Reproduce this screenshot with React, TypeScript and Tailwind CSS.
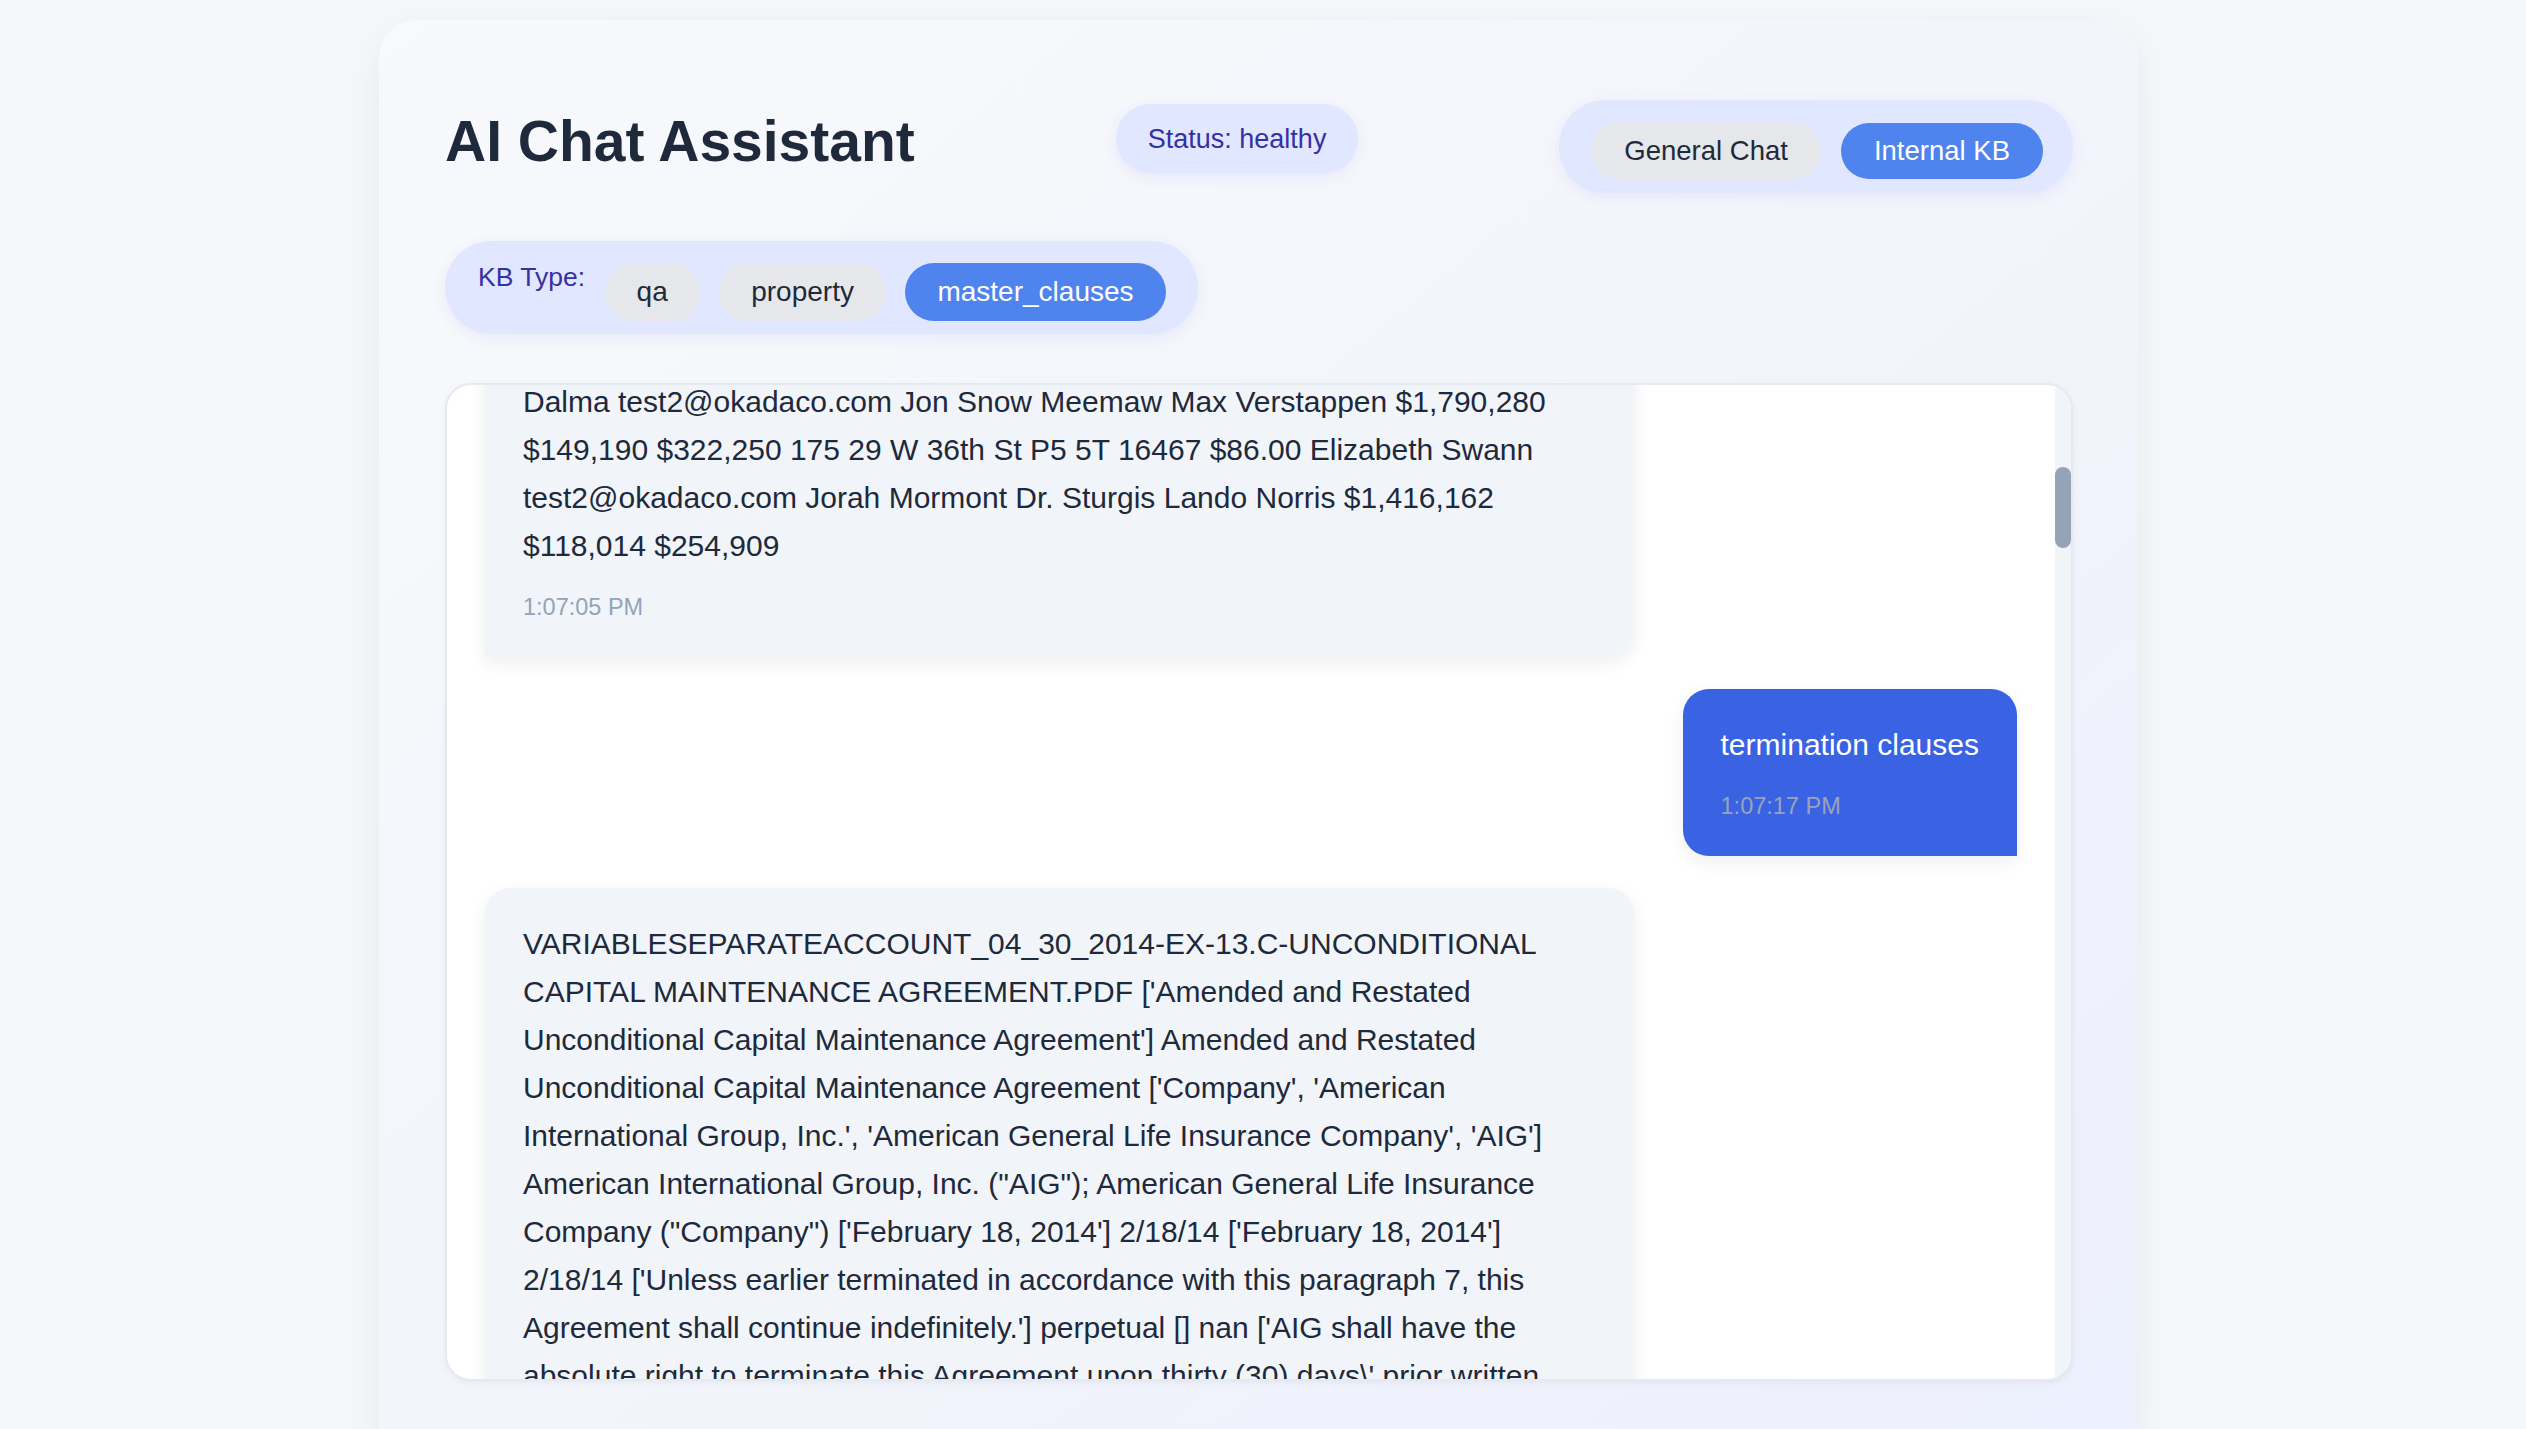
import React from "react";

type Message = {
  role: "user" | "assistant";
  time: string;
  lead?: string;
  text: string;
};

const records = [
  "VARIABLESEPARATEACCOUNT_04_30_2014-EX-13.C-UNCONDITIONAL CAPITAL MAINTENANCE AGREEMENT.PDF ['Amended and Restated Unconditional Capital Maintenance Agreement'] Amended and Restated Unconditional Capital Maintenance Agreement ['Company', 'American International Group, Inc.', 'American General Life Insurance Company', 'AIG'] American International Group, Inc. (\"AIG\"); American General Life Insurance Company (\"Company\") ['February 18, 2014'] 2/18/14 ['February 18, 2014'] 2/18/14 ['Unless earlier terminated in accordance with this paragraph 7, this Agreement shall continue indefinitely.'] perpetual [] nan ['AIG shall have the absolute right to terminate this Agreement upon thirty (30) days\\' prior written notice to the Company.'] 30 days ['This Agreement shall be governed by, and construed in accordance with, the laws of the State of New York, without giving effect to the principles of conflict of laws.'] New York ['This Agreement may not be assigned by either party without the prior written consent of the other party.'] Yes",
  "CYBERARKSOFTWARELTD_02_26_2014-EX-10.3-MASTER SERVICES AGREEMENT.PDF ['Master Services Agreement'] Master Services Agreement ['CyberArk Software Ltd.', 'Customer'] CyberArk Software Ltd.; Customer ['January 1, 2014'] 1/1/14 ['January 1, 2014'] 1/1/14 ['The initial term of this Agreement shall be three (3) years from the Effective Date.'] 12/31/16 ['This Agreement shall automatically renew for successive one (1) year periods unless either party provides notice of non-renewal.'] 1 year ['Either party may terminate this Agreement for material breach upon sixty (60) days\\' written notice if such breach remains uncured.'] 60 days ['This Agreement shall be governed by the laws of the State of Israel.'] Israel ['Neither party may assign this Agreement without the prior written consent of the other party, except in connection with a merger or sale of substantially all assets.'] Yes",
  "PALMETTOREALESTATETRUST_08_12_2015-EX-10.1-PROPERTY MANAGEMENT AGREEMENT.PDF ['Property Management Agreement'] Property Management Agreement ['Owner', 'Palmetto Real Estate Trust', 'Manager', 'Coastal Property Services, LLC'] Palmetto Real Estate Trust (\"Owner\"); Coastal Property Services, LLC (\"Manager\") ['August 12, 2015'] 8/12/15 ['September 1, 2015'] 9/1/15 ['The term of this Agreement shall commence on the Effective Date and continue for a period of five (5) years.'] 8/31/20 [] nan ['Owner may terminate this Agreement without cause upon ninety (90) days\\' prior written notice to Manager.'] 90 days ['This Agreement shall be governed by the laws of the State of South Carolina.'] South Carolina ['Manager shall not assign this Agreement without the prior written consent of Owner.'] Yes",
  "SOLARENERTECHCORP_03_01_2016-EX-10.4-SUPPLY AGREEMENT.PDF ['Supply Agreement'] Supply Agreement ['Solar Enertech Corp.', 'Buyer', 'Seller'] Solar Enertech Corp. (\"Seller\"); Buyer ['March 1, 2016'] 3/1/16 ['March 1, 2016'] 3/1/16 ['This Agreement shall remain in effect for two (2) years unless earlier terminated as provided herein.'] 2/28/18 ['Thereafter, this Agreement shall renew automatically for additional twelve (12) month terms.'] 12 months ['Either party may terminate this Agreement immediately upon written notice if the other party becomes insolvent or files a petition in bankruptcy.'] immediately ['This Agreement shall be governed by the laws of the State of California.'] California [] nan",
  "GREENLANDACQUISITIONHOLDINGS_11_05_2018-EX-10.9-LICENSE AGREEMENT.PDF ['Trademark License Agreement'] Trademark License Agreement ['Licensor', 'Licensee', 'Greenland Asset Management Corporation'] Greenland Asset Management Corporation (\"Licensor\"); Greenland Acquisition Holdings Ltd. (\"Licensee\") ['November 5, 2018'] 11/5/18 ['November 5, 2018'] 11/5/18 ['This Agreement shall terminate upon the earlier of (i) ten (10) years from the Effective Date or (ii) the date on which Licensee ceases to use the Licensed Marks.'] 11/5/28 [] nan ['Licensor may terminate this Agreement upon thirty (30) days\\' written notice if Licensee fails to comply with the quality control standards set forth in Section 4.'] 30 days ['This Agreement shall be governed by the laws of the State of Delaware.'] Delaware ['Licensee may not sublicense or assign any rights hereunder without Licensor\\'s prior written consent.'] Yes",
  "MIDWESTENERGYEMISSIONS_06_21_2017-EX-10.2-SERVICES AGREEMENT.PDF ['Services Agreement'] Services Agreement ['Midwest Energy Emissions Corp.', 'Client'] Midwest Energy Emissions Corp. (\"ME2C\"); Client ['June 21, 2017'] 6/21/17 ['July 1, 2017'] 7/1/17 ['The term of this Agreement shall be one (1) year and shall be extended automatically for successive one (1) year terms.'] 6/30/18 ['shall be extended automatically for successive one (1) year terms unless either party gives written notice at least thirty (30) days prior to expiration'] 1 year ['Client may terminate this Agreement for convenience upon one hundred twenty (120) days\\' prior written notice.'] 120 days ['This Agreement shall be governed by the laws of the State of Ohio.'] Ohio [] nan",
];

const messages: Message[] = [
  {
    role: "assistant",
    time: "1:06:31 PM",
    text: "Hello! I'm your AI assistant. Switch to Internal KB to search the knowledge base, or ask me anything in General Chat.",
  },
  { role: "user", time: "1:06:58 PM", text: "show property records" },
  {
    role: "assistant",
    time: "1:07:05 PM",
    lead:
      "Property records: Legal Name Email Tenant Contact Landlord Broker Annual Rent Monthly Rent Security Deposit Suite Address Floor Unit Lease ID Rent/SF Hannibal Lecter test2@okadaco.com Arya Stark Gandalf Charles Leclerc $2,104,500 $175,375 $350,750 210 1115 Broadway P3 3A 16452 $92.50 Bruce Wayne test2@okadaco.com Tyrion Lannister Mrs. Doubtfire Lewis Hamilton $1,236,880 $103,073 $206,147 118 29 W 36th St P2 2C 16455 $74.25 Ellen Ripley test2@okadaco.com Sansa Stark Dr. Strange George Russell $958,400 $79,867 $159,733 96 29 W 36th St P4 4B 16459 $68.00 Marty McFly test2@okadaco.com Samwell Tarly Grandpa Joe Oscar Piastri $1,512,340 $126,028 $252,057 142 1115 Broadway P6 6D 16461 $81.75 Tia",
    text: "Dalma test2@okadaco.com Jon Snow Meemaw Max Verstappen $1,790,280 $149,190 $322,250 175 29 W 36th St P5 5T 16467 $86.00 Elizabeth Swann test2@okadaco.com Jorah Mormont Dr. Sturgis Lando Norris $1,416,162 $118,014 $254,909",
  },
  { role: "user", time: "1:07:17 PM", text: "termination clauses" },
  { role: "assistant", time: "1:07:24 PM", text: records.join(" ") },
  { role: "user", time: "1:08:02 PM", text: "which ones auto-renew?" },
  {
    role: "assistant",
    time: "1:08:09 PM",
    text: [records[1], records[3], records[5], records[0], records[2], records[4]].join(" "),
  },
  { role: "user", time: "1:08:40 PM", text: "governing law" },
  {
    role: "assistant",
    time: "1:08:47 PM",
    text: [records[2], records[0], records[4], records[1], records[5], records[3]].join(" "),
  },
];

export default function App() {
  const [mode, setMode] = React.useState<"general" | "kb">("kb");
  const [kbType, setKbType] = React.useState("master_clauses");
  const [thumb, setThumb] = React.useState({ top: 0, height: 0 });
  const scrollRef = React.useRef<HTMLDivElement>(null);
  const anchorRef = React.useRef<HTMLParagraphElement>(null);

  const updateThumb = () => {
    const el = scrollRef.current;
    if (!el) return;
    const track = el.clientHeight;
    const height = Math.max(40, (track * track) / el.scrollHeight);
    const top = (el.scrollTop / (el.scrollHeight - track)) * (track - height);
    setThumb({ top, height });
  };

  React.useLayoutEffect(() => {
    if (scrollRef.current && anchorRef.current) {
      scrollRef.current.scrollTop = anchorRef.current.offsetTop + 7;
    }
    updateThumb();
  }, []);

  return (
    <div className="h-screen overflow-hidden bg-[#f6f7fa] pt-[20px] pr-[9px] font-['Liberation_Sans',Arial,sans-serif]">
      <div className="mx-auto w-[1759px] rounded-[38px] bg-gradient-to-br from-[#f8f9fb] via-[#f3f5fb] to-[#eceffd] pt-[80px] pl-[66px] pr-[65px] pb-[80px] shadow-[0_10px_40px_rgba(15,23,42,0.06)]">
        <div className="flex items-start justify-between">
          <h1 className="mt-[9px] text-[57px] font-bold leading-[64px] text-[#1e293b]">AI Chat Assistant</h1>

          <div className="mt-[4px] rounded-full bg-[#e0e7ff] px-[32px] pt-[15px] pb-[14px] text-[27px] leading-[40px] text-[#3730a3] shadow-[0_4px_14px_rgba(79,70,229,0.08)]">
            Status: healthy
          </div>

          <div className="flex gap-[20px] rounded-full bg-[#e0e7ff] pl-[32px] pr-[30px] pt-[23px] pb-[14px] shadow-[0_4px_14px_rgba(79,70,229,0.08)]">
            <button
              onClick={() => setMode("general")}
              className={`rounded-full px-[33px] py-[11px] text-[27.5px] leading-[34px] ${
                mode === "general" ? "bg-[#4f83ee] text-white" : "bg-[#e5e7eb] text-[#1f2937]"
              }`}
            >
              General Chat
            </button>
            <button
              onClick={() => setMode("kb")}
              className={`rounded-full px-[33px] py-[11px] text-[27.5px] leading-[34px] ${
                mode === "kb" ? "bg-[#4f83ee] text-white" : "bg-[#e5e7eb] text-[#1f2937]"
              }`}
            >
              Internal KB
            </button>
          </div>
        </div>

        <div className="mt-[48px] inline-flex items-start gap-[19.5px] rounded-full bg-[#e0e7ff] pl-[33px] pr-[32px] py-[13px] shadow-[0_4px_14px_rgba(79,70,229,0.08)]">
          <span className="mt-[6px] text-[26.5px] leading-[34px] text-[#3730a3]">KB Type:</span>
          {["qa", "property", "master_clauses"].map((t) => (
            <button
              key={t}
              onClick={() => setKbType(t)}
              className={`mt-[9px] rounded-full px-[32px] py-[12px] text-[28px] leading-[34px] ${
                kbType === t ? "bg-[#4f83ee] text-white" : "bg-[#e5e7eb] text-[#1f2937]"
              }`}
            >
              {t}
            </button>
          ))}
        </div>

        <div className="mt-[49px] flex h-[998px] overflow-hidden rounded-[26px] border-2 border-[#e5e9f0] bg-white shadow-[0_2px_6px_rgba(15,23,42,0.05)]">
          <div
            ref={scrollRef}
            onScroll={updateThumb}
            className="relative min-w-0 flex-1 overflow-y-auto [scrollbar-width:none]"
          >
            <div className="flex flex-col gap-[32px] px-[38px] py-[38px]">
              {messages.map((m, i) =>
                m.role === "user" ? (
                  <div
                    key={i}
                    className="max-w-[75%] self-end rounded-[26px] rounded-br-none bg-[#3a63e3] px-[38px] py-[32px] shadow-[0_6px_18px_rgba(15,23,42,0.07)]"
                  >
                    <p className="text-[30px] leading-[48px] text-white">{m.text}</p>
                    <p className="mt-[20px] text-[23.5px] leading-[35px] text-[#9aa3b6]">{m.time}</p>
                  </div>
                ) : (
                  <div
                    key={i}
                    className="max-w-[75%] self-start rounded-[26px] rounded-bl-none bg-[#f1f5f9] px-[38px] py-[32px] shadow-[0_6px_18px_rgba(15,23,42,0.07)]"
                  >
                    {m.lead && <p className="text-[30px] leading-[48px] text-[#1e293b]">{m.lead}</p>}
                    <p ref={m.lead ? anchorRef : undefined} className="text-[30px] leading-[48px] text-[#1e293b]">
                      {m.text}
                    </p>
                    <p className="mt-[20px] text-[23.5px] leading-[35px] text-[#94a3b8]">{m.time}</p>
                  </div>
                )
              )}
            </div>
          </div>

          <div className="w-[16px] shrink-0 bg-[#f1f5f9]">
            <div
              className="rounded-full bg-[#94a3b8]"
              style={{ marginTop: thumb.top, height: thumb.height }}
            />
          </div>
        </div>
      </div>
    </div>
  );
}
